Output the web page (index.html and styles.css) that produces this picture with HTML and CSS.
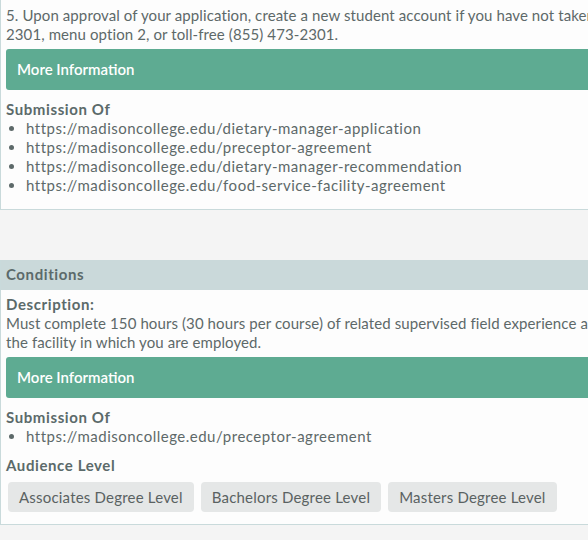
FILE: index.html
```html
<!DOCTYPE html>
<html>
<head>
<meta charset="utf-8">
<link rel="stylesheet" href="styles.css">
</head>
<body>
<div class="page">
  <section class="card card-first">
    <div class="card-body">
      <p class="text">5. Upon approval of your application, create a new student account if you have not taken classes at Madison College. Call (608) 246-<br>2301, menu option 2, or toll-free (855) 473-2301.</p>
      <div class="more">More Information</div>
      <h4 class="label">Submission Of</h4>
      <ul class="links">
        <li>https://madisoncollege.edu/dietary-manager-application</li>
        <li>https://madisoncollege.edu/preceptor-agreement</li>
        <li>https://madisoncollege.edu/dietary-manager-recommendation</li>
        <li>https://madisoncollege.edu/food-service-facility-agreement</li>
      </ul>
    </div>
  </section>

  <section class="card card-second">
    <div class="card-head">Conditions</div>
    <div class="card-body">
      <h4 class="label label-top">Description:</h4>
      <p class="text">Must complete 150 hours (30 hours per course) of related supervised field experience at<br>the facility in which you are employed.</p>
      <div class="more">More Information</div>
      <h4 class="label">Submission Of</h4>
      <ul class="links">
        <li>https://madisoncollege.edu/preceptor-agreement</li>
      </ul>
      <h4 class="label">Audience Level</h4>
      <div class="tags">
        <span class="tag">Associates Degree Level</span>
        <span class="tag">Bachelors Degree Level</span>
        <span class="tag">Masters Degree Level</span>
      </div>
    </div>
  </section>
</div>
</body>
</html>
```
FILE: styles.css
```css
html, body {
  margin: 0;
  padding: 0;
  overflow: hidden;
  background: #f4f4f4;
}
body {
  font-family: Lato, "Open Sans", sans-serif;
  font-size: 15px;
  line-height: 19px;
  color: #5d6969;
}
.page {
  width: 660px;
}
.card {
  background: #fdfdfd;
  border: 1px solid #c9dadb;
}
.card-first {
  border-top: none;
}
.card-second {
  margin-top: 50px;
  border-top: none;
}
.card-head {
  background: #cad9da;
  padding: 5px 5px 6px 5px;
  font-weight: bold;
  letter-spacing: 0.6px;
  color: #5b6a6a;
}
.card-body {
  padding: 6px 5px 14px 5px;
}
.card-second .card-body {
  padding: 5px 5px 12px 5px;
}
.text {
  margin: 0;
  white-space: nowrap;
  letter-spacing: 0.1px;
}
.more {
  margin-top: 5px;
  background: #5eab92;
  color: #ffffff;
  border-radius: 3px;
  padding: 11px 11px;
  font-weight: 600;
}
.label {
  margin: 10px 0 0 0;
  font-size: 15px;
  font-weight: bold;
  letter-spacing: 0.6px;
  color: #5b6a6a;
}
.label-top {
  margin-top: 0;
}
.links {
  margin: 0;
  padding-left: 20px;
  letter-spacing: 0.5px;
}
.tags {
  margin-top: 7px;
  display: flex;
  gap: 7px;
  padding-left: 2px;
}
.tag {
  background: #e5e7e7;
  border-radius: 4px;
  padding: 6px 11px 5px 11px;
  letter-spacing: 0.2px;
  color: #5a6262;
}
```
